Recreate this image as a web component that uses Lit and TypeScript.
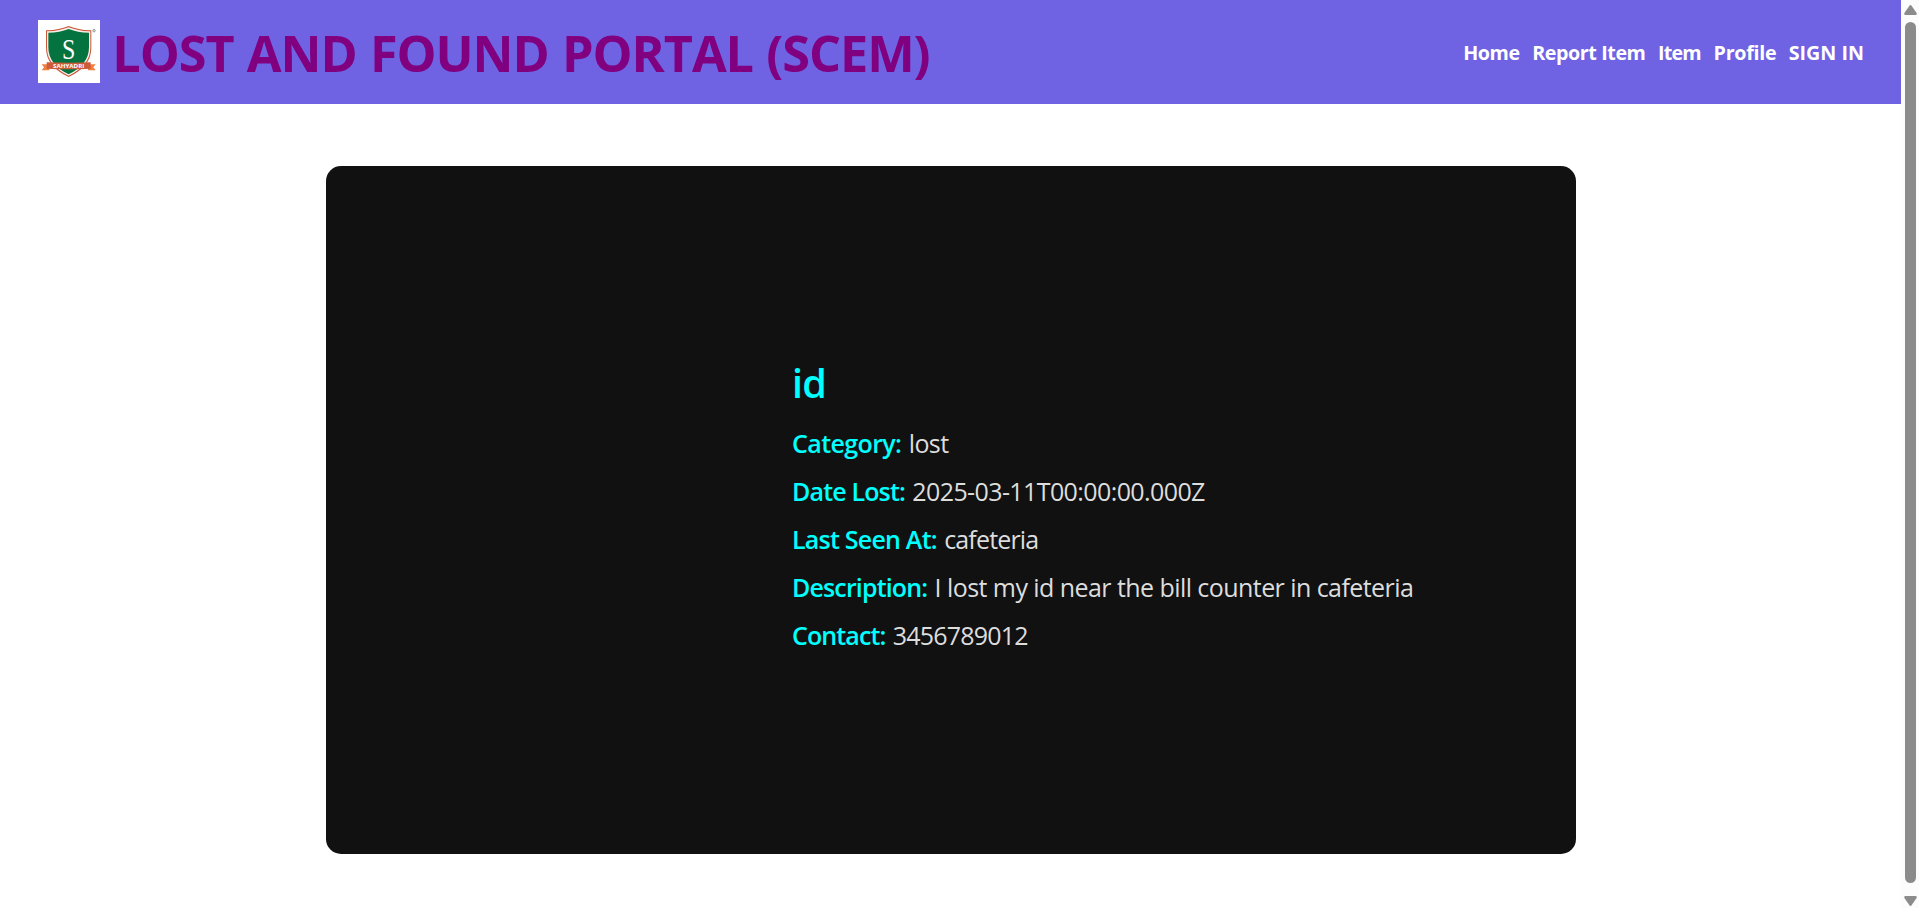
import { LitElement, html, css } from "lit";
import { customElement } from "lit/decorators.js";

interface Field {
  key: string;
  label: string;
  value: string;
}

const NAV = [
  { key: "home", label: "Home" },
  { key: "report", label: "Report Item" },
  { key: "item", label: "Item" },
  { key: "profile", label: "Profile" },
  { key: "signin", label: "SIGN IN" },
];

const FIELDS: Field[] = [
  { key: "category", label: "Category:", value: "lost" },
  { key: "date", label: "Date Lost:", value: "2025-03-11T00:00:00.000Z" },
  { key: "seen", label: "Last Seen At:", value: "cafeteria" },
  { key: "description", label: "Description:", value: "I lost my id near the bill counter in cafeteria" },
  { key: "contact", label: "Contact:", value: "3456789012" },
];

@customElement("portal-header")
class PortalHeader extends LitElement {
  static styles = css`
    :host {
      display: flex;
      align-items: center;
      justify-content: space-between;
      box-sizing: border-box;
      height: 104px;
      padding: 0 37px 0 38px;
      background: #6f63e4;
    }
    .brand {
      display: flex;
      align-items: center;
      gap: 12.3px;
    }
    .logo {
      display: block;
      width: 62px;
      height: 63px;
      margin-top: -1px;
    }
    .logo-text {
      font-family: "Open Sans", sans-serif;
      font-weight: 700;
    }
    .logo-s {
      font-family: "Liberation Serif", serif;
    }
    h1 {
      margin: 0;
      padding-top: 1px;
      font-size: 50.4px;
      line-height: 68px;
      font-weight: 700;
      letter-spacing: -1.06px;
      word-spacing: 1.2px;
      color: #800080;
      white-space: nowrap;
    }
    nav {
      display: flex;
      padding-top: 2px;
    }
    a {
      font-size: 19.7px;
      line-height: 30px;
      font-weight: 700;
      color: #fff;
      white-space: nowrap;
    }
    .home { letter-spacing: -0.43px; margin-right: 12.5px; }
    .report { letter-spacing: -0.41px; margin-right: 12.5px; }
    .item { letter-spacing: -0.8px; margin-right: 12.7px; }
    .profile { letter-spacing: -0.27px; margin-right: 12.3px; }
  `;

  render() {
    return html`
      <div class="brand">
        <svg class="logo" viewBox="0 0 186 189">
          <rect width="186" height="189" fill="#fff" />
          <path d="M24 31C48 32 70 26 92 18C114 26 136 32 160 31V82C160 123 137 150 92 171C47 150 24 123 24 82Z" fill="#c9573a" />
          <path d="M27 34C50 35 72 29 92 22C112 29 134 35 157 34V82C157 121 135 146 92 167C49 146 27 121 27 82Z" fill="#fbeee9" />
          <path d="M31 38C54 38 74 34 92 27C110 34 130 38 153 38V82C153 118 132 143 92 163C52 143 31 118 31 82Z" fill="#04733f" />
          <path d="M11 133H34V151H11L18 142ZM173 133H150V151H173L166 142Z" fill="#f0803f" />
          <path d="M26 127Q92 129 158 127V146Q92 149 26 146Z" fill="#cc5c3a" />
          <text class="logo-s" x="92" y="116" font-size="90" text-anchor="middle" fill="#fff" textLength="40" lengthAdjust="spacingAndGlyphs">S</text>
          <text class="logo-text" x="92" y="143" font-size="17.5" text-anchor="middle" fill="#fff" textLength="94" lengthAdjust="spacingAndGlyphs">SAHYADRI</text>
          <circle cx="168" cy="32" r="4" fill="#ccc" stroke="#777" stroke-width="1.5" />
        </svg>
        <h1>LOST AND FOUND PORTAL (SCEM)</h1>
      </div>
      <nav>${NAV.map((n) => html`<a class=${n.key}>${n.label}</a>`)}</nav>
    `;
  }
}

@customElement("item-card")
class ItemCard extends LitElement {
  static styles = css`
    :host {
      display: grid;
      grid-template-columns: 466px 1fr;
      box-sizing: border-box;
      width: 1250px;
      height: 688px;
      padding-top: 187px;
      border-radius: 15px;
      background: #111;
    }
    .details {
      grid-column: 2;
    }
    h2 {
      margin: 0 0 6px;
      font-size: 39.5px;
      line-height: 60px;
      font-weight: 600;
      letter-spacing: -0.8px;
      color: #0ff;
    }
    p {
      display: flex;
      gap: 7.3px;
      margin: 0;
      font-size: 25px;
      line-height: 48px;
      color: #ddd;
      white-space: nowrap;
    }
    strong {
      font-weight: 600;
      color: #0ff;
    }
    .category strong { letter-spacing: -0.6px; }
    .category span { letter-spacing: -0.6px; }
    .date strong { letter-spacing: -0.835px; }
    .date span { letter-spacing: -0.6px; }
    .seen strong { letter-spacing: -0.77px; }
    .seen span { letter-spacing: -0.82px; }
    .description strong { letter-spacing: -0.85px; }
    .description span { letter-spacing: -0.56px; }
    .contact strong { letter-spacing: -0.89px; }
    .contact span { letter-spacing: -0.8px; }
  `;

  render() {
    return html`
      <div class="details">
        <h2>id</h2>
        ${FIELDS.map((f) => html`<p class=${f.key}><strong>${f.label}</strong><span>${f.value}</span></p>`)}
      </div>
    `;
  }
}

@customElement("scroll-rail")
class ScrollRail extends LitElement {
  static styles = css`
    :host {
      display: flex;
      flex-direction: column;
      align-items: center;
      box-sizing: border-box;
      width: 18px;
      padding: 5px 0 2px;
      background: #fcfcfc;
    }
    svg {
      display: block;
      width: 13px;
      height: 10px;
      fill: #8b8b8b;
    }
    .thumb {
      width: 11px;
      flex: 1;
      margin: 7px 0 13px;
      border-radius: 6px;
      background: #8b8b8b;
    }
  `;

  render() {
    return html`
      <svg viewBox="0 0 13 10"><path d="M5.4 .7Q6.5-.6 7.6.7L12.6 8Q13.2 10 11.5 10H1.5Q-.2 10 .4 8Z" /></svg>
      <div class="thumb"></div>
      <svg viewBox="0 0 13 10"><path d="M5.4 9.3Q6.5 10.6 7.6 9.3L12.6 2Q13.2 0 11.5 0H1.5Q-.2 0 .4 2Z" /></svg>
    `;
  }
}

@customElement("app-root")
class AppRoot extends LitElement {
  static styles = css`
    :host {
      display: grid;
      grid-template-columns: 1fr 18px;
      height: 908px;
      overflow: hidden;
      background: #fff;
      font-family: "Open Sans", "Noto Sans", sans-serif;
    }
    .page {
      display: flex;
      flex-direction: column;
    }
    main {
      display: flex;
      justify-content: center;
      padding: 62px 0 0 1px;
    }
  `;

  render() {
    return html`
      <div class="page">
        <portal-header></portal-header>
        <main><item-card></item-card></main>
      </div>
      <scroll-rail></scroll-rail>
    `;
  }
}
